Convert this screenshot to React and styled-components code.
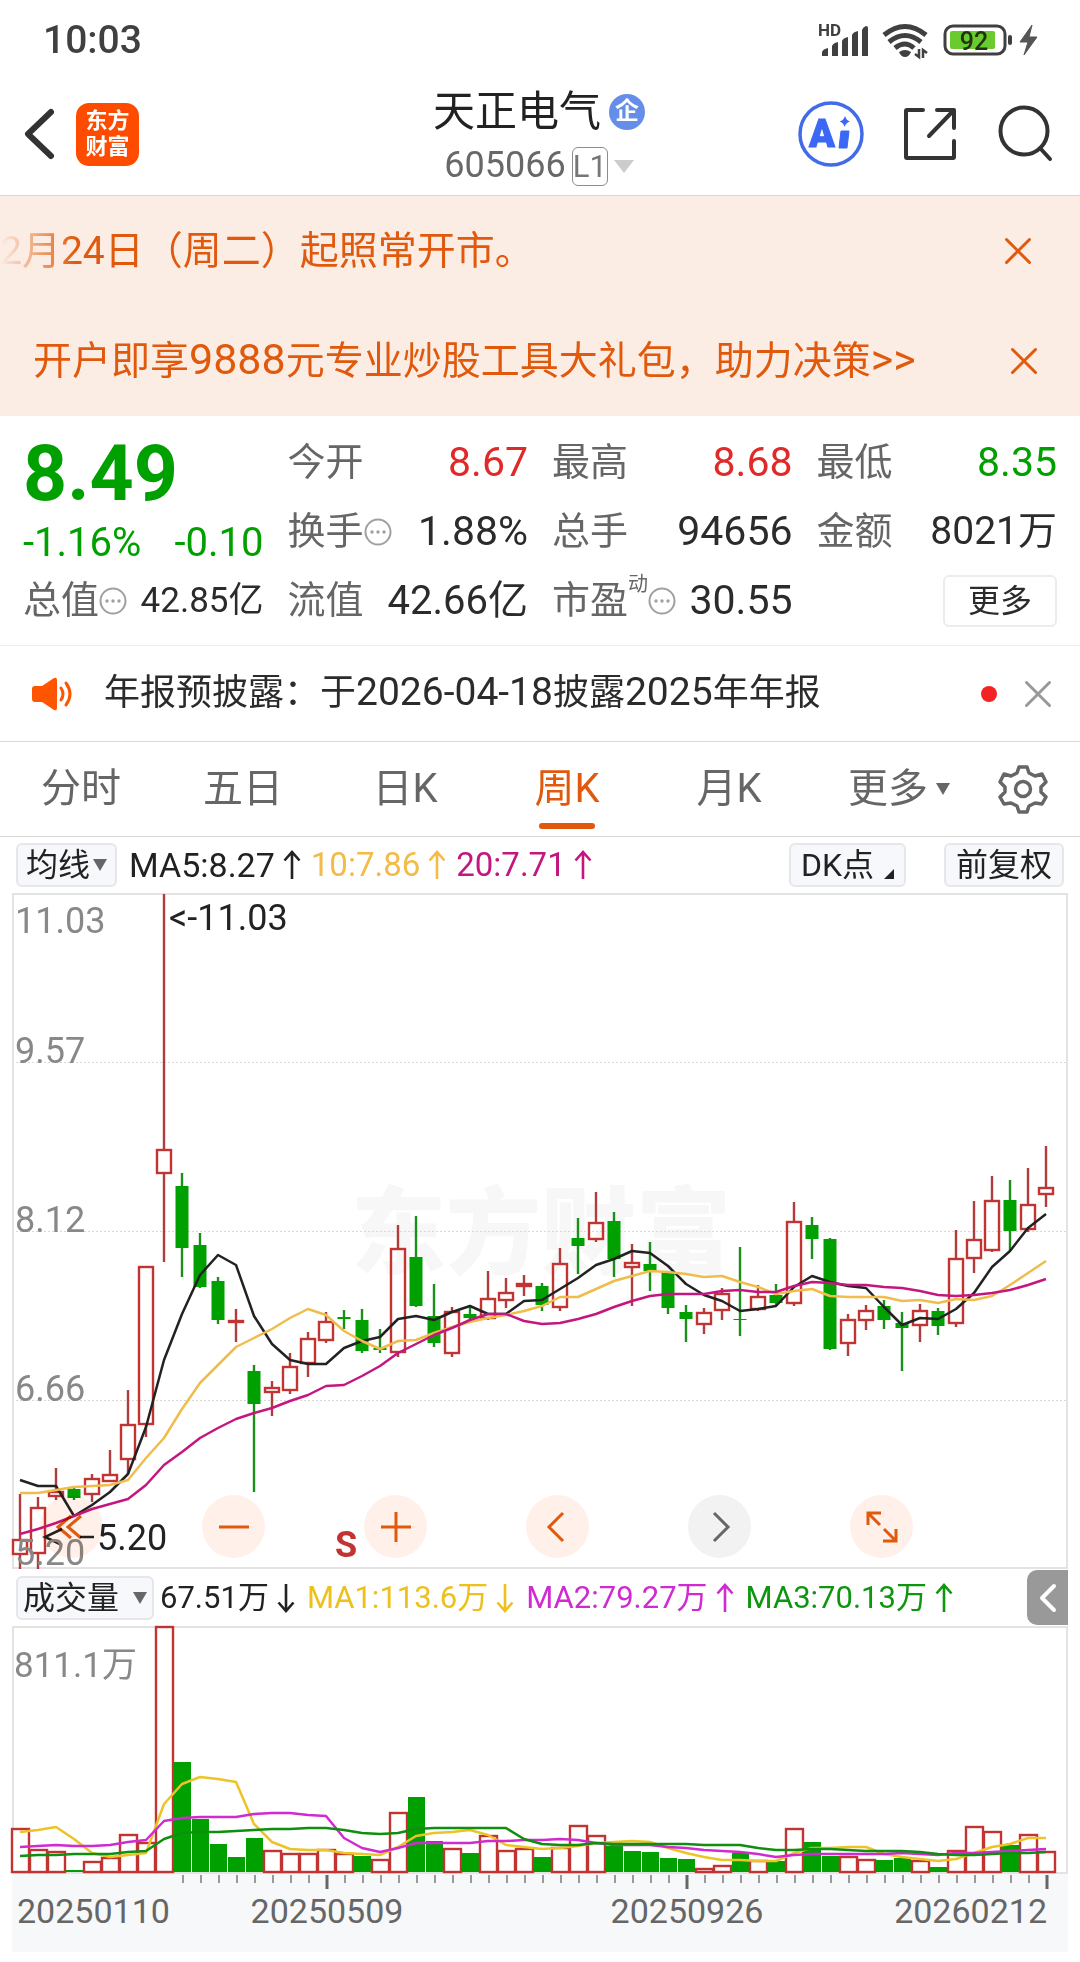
import React from 'react'
import styled, { createGlobalStyle } from 'styled-components'

const RED = '#c23431'
const GREEN = '#00a000'
const ORANGE = '#e0590c'
const FONT = "Roboto, 'Noto Sans CJK SC', sans-serif"

const GlobalStyle = createGlobalStyle`
    * {
        box-sizing: border-box;
    }

    body {
        margin: 0;
        background-color: #ffffff;
        color: #2b2b2b;
        font-family: ${FONT};
        line-height: 1.2;
    }

    button {
        margin: 0;
        padding: 0;
        border: none;
        background: none;
        color: inherit;
        font-family: inherit;
        line-height: inherit;
        cursor: pointer;
    }

    svg {
        display: block;
        flex-shrink: 0;
        overflow: visible;
    }
`

const Num = styled.span`
    font-size: ${({ $size }) => $size}px;
    line-height: 1;
`

/* ---------- status bar ---------- */

const StatusBar = styled.div`
    display: flex;
    align-items: center;
    justify-content: space-between;
    height: 76px;
    padding: 4px 42px 0 43px;
    color: #404040;
    font-size: 39px;
    font-weight: 500;
`

const StatusIcons = () => (
    <svg width="222" height="40" viewBox="816 20 222 40" fill="#404040">
        <text x="818" y="36" fontSize="17" fontWeight="700" fontFamily={FONT}>HD</text>
        <path d="M822 56v-4q1-3 6-4v8zM832 56V46q1-3 6-4v14zM842 56V41q1-3 6-4v19zM852 56V35q1-3 6-4v25zM862 56V30q1-3 4-4q2 0 2 2v28z" />
        <g fill="none" stroke="#404040" strokeWidth="5">
            <path d="M884 35Q905 18 926 35" />
            <path d="M889 42Q905 29 921 42" />
            <path d="M895 48Q905 40 914 48" />
        </g>
        <path d="M899 52q6-4 12 0q-2 5-6 5t-6-5z" />
        <path d="M919 49v8l-4-3M923 58v-8l4 3" fill="none" stroke="#404040" strokeWidth="2.5" />
        <rect x="945" y="26" width="60" height="28" rx="8" fill="none" stroke="#404040" strokeWidth="3" />
        <rect x="950" y="31" width="45" height="18" rx="2" fill="#69cb2d" />
        <text x="974" y="50" fontSize="25" fontWeight="500" textAnchor="middle" fill="#223311" fontFamily={FONT}>92</text>
        <rect x="1008" y="35" width="4" height="10" rx="2" />
        <path d="M1032 25l-12 17h8l-4 13 13-18h-8z" fill="#555555" stroke="#555555" />
    </svg>
)

/* ---------- header ---------- */

const Header = styled.header`
    display: grid;
    grid-template-columns: 1fr auto 1fr;
    align-items: start;
    height: 120px;
    padding: 4px 28px 0 24px;
    border-bottom: 1px solid #d8d8d8;
`

const HeaderSide = styled.div`
    display: flex;
    align-items: center;
    justify-content: ${({ $end }) => ($end ? 'flex-end' : 'flex-start')};
    height: 108px;
    gap: ${({ $gap }) => $gap}px;
`

const AppLogo = styled.a`
    display: flex;
    flex-direction: column;
    align-items: center;
    justify-content: center;
    width: 63px;
    height: 63px;
    border-radius: 13px;
    background-color: #ff4b00;
    color: #ffffff;
    font-size: 22px;
    line-height: 26px;
    font-weight: 700;
    text-decoration: none;
`

const Title = styled.div`
    padding: 5px 0 0 2px;
`

const TitleLine = styled.div`
    display: flex;
    align-items: center;
    justify-content: center;
    height: 54px;
    gap: ${({ $gap }) => $gap}px;
`

const StockName = styled.h1`
    margin: 0;
    font-size: 42px;
    line-height: 54px;
    font-weight: 400;
    color: #222222;
`

const CompanyBadge = styled.span`
    width: 36px;
    height: 36px;
    border-radius: 50%;
    background-color: #648ee8;
    color: #ffffff;
    font-size: 24px;
    line-height: 34px;
    font-weight: 700;
    text-align: center;
`

const StockCode = styled.span`
    color: #686868;
    font-size: 36px;
`

const LevelTag = styled.span`
    width: 36px;
    height: 39px;
    border: 1px solid #8c8c8c;
    border-radius: 6px;
    color: #777777;
    font-size: 31px;
    line-height: 37px;
    text-align: center;
`

const Caret = styled.span`
    width: 0;
    height: 0;
    border-left: ${({ $w }) => $w}px solid transparent;
    border-right: ${({ $w }) => $w}px solid transparent;
    border-top: ${({ $h }) => $h}px solid ${({ $color }) => $color};
`

/* ---------- banners ---------- */

const Banners = styled.section`
    background-color: #fcede4;
    color: ${ORANGE};
`

const Banner = styled.div`
    display: flex;
    align-items: center;
    justify-content: space-between;
    height: 110px;
    padding: 0 ${({ $right }) => $right}px 0 ${({ $left }) => $left}px;
    font-size: 39px;
    white-space: nowrap;
`

const Marquee = styled.span`
    mask-image: linear-gradient(to right, transparent, #000000 76px);
`

const Cross = ({ color, width = 3 }) => (
    <svg width="26" height="26" viewBox="0 0 26 26" stroke={color} strokeWidth={width} strokeLinecap="round">
        <path d="M1.5 1.5l23 23M24.5 1.5l-23 23" />
    </svg>
)

/* ---------- quote ---------- */

const Quote = styled.section`
    display: grid;
    grid-template-columns: repeat(4, 1fr);
    grid-template-rows: repeat(3, 69px);
    column-gap: 24px;
    padding: 12px 23px 10px;
    border-bottom: 1px solid #eeeeee;
`

const PriceCell = styled.div`
    grid-row: span 2;
    color: ${GREEN};
`

const Price = styled.div`
    font-size: 77px;
    line-height: 92px;
    font-weight: 700;
`

const Change = styled.div`
    display: flex;
    justify-content: space-between;
    font-size: 40px;
    line-height: 46px;
`

const Stat = styled.div`
    display: flex;
    align-items: center;
    justify-content: space-between;
    white-space: nowrap;
`

const StatLabel = styled.span`
    display: flex;
    align-items: center;
    color: #666666;
    font-size: 38px;
    line-height: 69px;
`

const Sup = styled.sup`
    align-self: flex-start;
    font-size: 20px;
    line-height: 36px;
`

const StatValue = styled.span`
    color: ${({ $color }) => $color || '#2b2b2b'};
    font-size: ${({ $size }) => $size || 41}px;
`

const MoreButton = styled.button`
    justify-self: end;
    align-self: center;
    width: 114px;
    height: 52px;
    border: 2px solid #ececec;
    border-radius: 6px;
    font-size: 32px;
    line-height: 44px;
`

const Dots = () => (
    <svg width="28" height="28" viewBox="0 0 28 28" fill="#a0a0a0">
        <circle cx="14" cy="14" r="12.5" fill="none" stroke="#a0a0a0" strokeWidth="2" />
        <circle cx="8" cy="14" r="1.7" />
        <circle cx="14" cy="14" r="1.7" />
        <circle cx="20" cy="14" r="1.7" />
    </svg>
)

/* ---------- notice ---------- */

const Notice = styled.section`
    display: flex;
    align-items: center;
    height: 96px;
    padding: 0 29px 0 32px;
    border-bottom: 1px solid #d8d8d8;
`

const NoticeText = styled.a`
    flex: 1;
    padding-left: 30px;
    color: #2b2b2b;
    font-size: 36px;
    white-space: nowrap;
    text-decoration: none;
`

const RedDot = styled.span`
    width: 16px;
    height: 16px;
    margin-right: 28px;
    border-radius: 50%;
    background-color: #f42323;
`

/* ---------- tabs ---------- */

const Tabs = styled.nav`
    display: flex;
    align-items: stretch;
    height: 95px;
    border-bottom: 1px solid #d8d8d8;
`

const Tab = styled.button`
    position: relative;
    flex: 0 0 15%;
    display: flex;
    align-items: center;
    justify-content: ${({ $end }) => ($end ? 'flex-end' : 'center')};
    gap: 8px;
    padding-right: ${({ $end }) => ($end ? 22 : 0)}px;
    color: ${({ $active }) => ($active ? ORANGE : '#666666')};
    font-size: 40px;

    &::after {
        content: '';
        display: ${({ $active }) => ($active ? 'block' : 'none')};
        position: absolute;
        bottom: 7px;
        left: calc(50% - 28px);
        width: 56px;
        height: 6px;
        border-radius: 3px;
        background-color: ${ORANGE};
    }
`

const GearButton = styled.button`
    flex: 1;
    display: flex;
    align-items: center;
    justify-content: center;
    padding-right: 6px;
`

/* ---------- indicators ---------- */

const Indicators = styled.div`
    display: flex;
    align-items: center;
    height: ${({ $height }) => $height}px;
    padding: 0 ${({ $right }) => $right}px 0 16px;
    white-space: nowrap;
`

const Chip = styled.button`
    display: flex;
    align-items: center;
    justify-content: center;
    gap: ${({ $gap }) => $gap || 3}px;
    height: 44px;
    padding: 0 ${({ $pad }) => $pad || 8}px;
    border: 2px solid #e5e7eb;
    border-radius: 6px;
    background-color: #f7f8fb;
    color: #222222;
    font-size: 32px;
    line-height: 40px;
`

const Corner = styled.span`
    align-self: flex-end;
    margin-bottom: 6px;
    border-left: 10px solid transparent;
    border-bottom: 10px solid #222222;
`

const Reading = styled.span`
    display: flex;
    align-items: center;
    gap: 8px;
    margin-left: ${({ $left }) => $left}px;
    color: ${({ $color }) => $color};
    font-size: ${({ $size }) => $size}px;
`

const Spacer = styled.span`
    flex: 1;
`

const ChipGap = styled.span`
    width: 38px;
`

const Drawer = styled.button`
    display: flex;
    align-items: center;
    justify-content: center;
    width: 41px;
    height: 55px;
    border-radius: 10px 0 0 10px;
    background-color: #999999;
`

const Arrow = ({ down }) => (
    <svg width="18" height="30" viewBox="0 0 18 30" fill="none" stroke="currentColor" strokeWidth="2.6">
        <path d={down ? 'M9 1v27M1.500 19.500L9 28l7.500-8.500' : 'M9 29V2M1.500 10.500L9 2l7.500 8.500'} />
    </svg>
)

/* ---------- charts ---------- */

const ChartArea = styled.div`
    position: relative;
    margin: 0 12px;

    & > svg {
        width: 100%;
        height: auto;
    }
`

const ChartTools = styled.div`
    position: absolute;
    left: 0;
    right: 0;
    bottom: 11px;
    display: flex;
    justify-content: space-between;
    padding: 0 155px 0 28px;
    mix-blend-mode: multiply;
`

const ToolButton = styled.button`
    display: flex;
    align-items: center;
    justify-content: center;
    width: 63px;
    height: 63px;
    border-radius: 50%;
    background-color: ${({ $muted }) => ($muted ? '#f2f2f2' : '#fff1e9')};
    color: ${({ $muted }) => ($muted ? '#666666' : ORANGE)};
`

const tools = [
    { name: '左移到头', path: 'M15 5L2 16l13 11M25 5L12 16l13 11' },
    { name: '缩小', path: 'M1 16h30' },
    { name: '放大', path: 'M1 16h30M16 1v30' },
    { name: '左移', path: 'M21 2L7 16l14 14' },
    { name: '右移', path: 'M10 2l14 14L10 30', muted: true },
    { name: '全屏', path: 'M2 14V2h13M2 2l12 12M30 18v12H17M30 30L18 18' },
]

// [up, high, body top, body bottom, low]
const candles = [
    [1, 601, 647, 661, 676], [1, 604, 615, 660, 676], [1, 575, 599, 603, 607], [0, 595, 596, 605, 607],
    [1, 581, 586, 601, 609], [1, 557, 582, 588, 589], [1, 497, 532, 566, 581], [1, 373, 374, 531, 544],
    [1, 1, 257, 280, 369], [0, 280, 293, 355, 384], [0, 340, 352, 394, 395], [0, 384, 388, 427, 431],
    [1, 416, 428, 429, 449], [0, 472, 478, 511, 599], [1, 488, 495, 499, 523], [1, 460, 474, 497, 501],
    [1, 439, 446, 470, 484], [1, 419, 429, 447, 450], [0, 417, 424, 426, 436], [0, 416, 427, 458, 460],
    [0, 436, 455, 457, 460], [1, 332, 356, 459, 464], [0, 323, 364, 413, 414], [0, 391, 423, 450, 454],
    [1, 414, 419, 460, 464], [0, 412, 421, 425, 427], [1, 378, 406, 425, 427], [1, 385, 400, 407, 415],
    [1, 382, 391, 393, 403], [0, 390, 393, 412, 418], [1, 355, 371, 414, 418], [0, 325, 345, 353, 381],
    [1, 299, 330, 346, 349], [0, 319, 328, 366, 384], [1, 351, 370, 374, 413], [0, 349, 371, 378, 398],
    [0, 378, 379, 415, 421], [0, 412, 419, 426, 449], [1, 415, 420, 431, 441], [1, 395, 401, 417, 427],
    [0, 354, 426, 427, 443], [1, 392, 404, 416, 418], [0, 391, 402, 410, 413], [1, 309, 329, 410, 413],
    [0, 324, 332, 346, 366], [0, 345, 346, 456, 457], [1, 421, 427, 450, 463], [1, 412, 418, 427, 437],
    [0, 407, 413, 427, 436], [0, 419, 430, 435, 478], [1, 411, 418, 432, 449], [0, 415, 418, 433, 442],
    [1, 337, 366, 430, 434], [1, 308, 347, 365, 380], [1, 283, 308, 357, 359], [0, 287, 307, 338, 358],
    [1, 275, 312, 336, 339], [1, 253, 295, 301, 314],
]

const ma5 = [
    587, 593, 593, 623, 612, 599, 581, 534, 467, 421, 382, 362, 372, 423, 451, 467, 471, 471, 455, 448,
    444, 426, 423, 427, 419, 413, 421, 421, 408, 407, 396, 385, 372, 366, 358, 360, 373, 391, 402, 408,
    418, 416, 413, 394, 383, 389, 393, 395, 414, 432, 425, 426, 416, 400, 374, 358, 335, 321,
]
const ma10 = [
    600, 600, 597, 594, 593, 592, 587, 565, 545, 516, 490, 472, 454, 445, 436, 425, 416, 422, 438, 448,
    456, 448, 447, 440, 434, 429, 425, 422, 418, 413, 404, 404, 396, 388, 383, 378, 379, 381, 384, 383,
    389, 394, 401, 398, 396, 403, 404, 404, 404, 408, 407, 410, 406, 407, 403, 392, 380, 368,
]
const ma20 = [
    641, 636, 630, 623, 616, 611, 606, 592, 572, 559, 545, 535, 526, 520, 515, 508, 502, 493, 492, 483,
    473, 460, 451, 442, 435, 427, 421, 421, 428, 431, 430, 426, 421, 414, 408, 403, 401, 401, 401, 398,
    397, 399, 399, 393, 389, 390, 392, 392, 394, 395, 398, 402, 403, 402, 400, 397, 392, 386,
]

// positive: rising week, negative: falling week
const volumes = [
    43, 22, 20, -2, 10, 14, 37, 29, 245, -110, -53, -28, -15, -34, 21, 18, 18, 22, 18, -16,
    12, 59, -75, -31, 23, -19, 36, 21, 23, -15, 24, 46, 36, -26, -21, -20, -14, -13, 3, 6,
    -19, 11, -11, 43, -30, -16, 15, 12, -12, -14, 11, -5, 21, 45, 40, -27, 37, 20,
]
const vma1 = [
    40, 42, 45, 33, 19, 15, 17, 19, 68, 88, 95, 93, 90, 48, 30, 23, 22, 22, 19, 18,
    17, 25, 36, 39, 40, 42, 37, 27, 25, 23, 24, 26, 29, 30, 31, 30, 24, 19, 15, 12,
    12, 11, 11, 19, 24, 24, 25, 25, 18, 15, 13, 11, 13, 19, 25, 28, 34, 34,
]
const vma2 = [
    25, 26, 27, 26, 26, 27, 30, 32, 51, 54, 55, 55, 55, 58, 59, 59, 57, 56, 34, 24,
    20, 24, 29, 29, 29, 29, 31, 31, 32, 32, 33, 32, 29, 27, 27, 27, 25, 24, 22, 21,
    20, 18, 15, 17, 18, 18, 18, 18, 18, 19, 18, 17, 19, 19, 20, 21, 22, 23,
]
const vma3 = [
    16, 17, 17, 18, 18, 18, 20, 21, 33, 39, 40, 40, 41, 42, 43, 43, 44, 44, 42, 39,
    38, 39, 43, 44, 44, 44, 44, 44, 33, 28, 27, 27, 29, 28, 28, 28, 28, 28, 27, 27,
    27, 24, 22, 22, 23, 23, 22, 21, 21, 21, 20, 18, 17, 17, 18, 19, 19, 20,
]

const STEP = 18
const VOLUME_BASE = 246
const FIRST_TICK = 9
const MAJOR_TICKS = [17, 37, 57]

const xAt = (i) => 8 + i * STEP
const toPoints = (values, toY = (v) => v) => values.map((v, i) => `${xAt(i)},${toY(v)}`).join(' ')
const volumeY = (v) => VOLUME_BASE - v

const Line = ({ points, color }) => (
    <polyline points={points} fill="none" stroke={color} strokeWidth="2.5" strokeLinejoin="round" />
)

const Candle = ({ index, data }) => {
    const [up, high, top, bottom, low] = data
    const x = xAt(index)

    if (up) {
        return (
            <g stroke={RED} strokeWidth="2.4" fill="none">
                <path d={`M${x} ${high}V${top}M${x} ${bottom}V${low}`} stroke="#b03c3c" />
                <rect x={x - 7} y={top} width="14" height={bottom - top} />
            </g>
        )
    }
    return (
        <g fill={GREEN}>
            <path d={`M${x} ${high}V${low}`} stroke="#1a8f1a" strokeWidth="2.4" />
            <rect x={x - 6.5} y={top} width="13" height={bottom - top} />
        </g>
    )
}

const PriceChart = () => (
    <svg viewBox="0 0 1056 676" fontFamily={FONT} fontSize="36">
        <text x="529" y="374" fontSize="95" fontWeight="900" textAnchor="middle" fill="#f7f7f7">东方财富</text>
        {[169, 338, 507].map((y) => (
            <path key={y} d={`M0 ${y}.5H1056`} stroke="#d8d8d8" strokeDasharray="2 2" />
        ))}
        <rect x="1" y="1" width="1054" height="674" fill="none" stroke="#e3e3e3" strokeWidth="2" />
        {candles.map((data, i) => <Candle key={i} index={i} data={data} />)}
        <Line points={toPoints(ma5)} color="#222222" />
        <Line points={toPoints(ma10)} color="#f0bd4c" />
        <Line points={toPoints(ma20)} color="#c3177f" />
        <text x="157" y="37" fill="#222222">&lt;-11.03</text>
        <path d="M50 636L33 644l17 8M68 644h14" fill="none" stroke="#222222" strokeWidth="2.5" />
        <text x="85" y="657" fill="#222222">5.20</text>
        <text x="323" y="664" fontWeight="700" fill={RED}>S</text>
        <g fill="#888888">
            <text x="3" y="40">11.03</text>
            <text x="3" y="170">9.57</text>
            <text x="3" y="339">8.12</text>
            <text x="3" y="508">6.66</text>
            <text x="3" y="672">5.20</text>
        </g>
    </svg>
)

const VolumeChart = () => (
    <svg viewBox="0 0 1056 248" fontFamily={FONT} fontSize="35">
        <rect x="1" y="1" width="1054" height="246" fill="none" stroke="#e3e3e3" strokeWidth="2" />
        {volumes.map((v, i) => (v > 0
            ? <rect key={i} x={xAt(i) - 8} y={volumeY(v)} width="17" height={v} fill="#ffffff" stroke={RED} strokeWidth="2.4" />
            : <rect key={i} x={xAt(i) - 8} y={volumeY(-v)} width="17" height={-v} fill={GREEN} />
        ))}
        <Line points={toPoints(vma1, volumeY)} color="#edc427" />
        <Line points={toPoints(vma2, volumeY)} color="#cf2bd0" />
        <Line points={toPoints(vma3, volumeY)} color="#0f8f0f" />
        <text x="2" y="51" fill="#888888">811.1万</text>
    </svg>
)

const DateAxis = () => (
    <svg viewBox="0 0 1056 78" fontFamily={FONT} fontSize="34" fill="#666666">
        <rect width="1056" height="78" fill="#f7f8fa" />
        {candles.map((_, i) => {
            const major = MAJOR_TICKS.includes(i)
            if (i < FIRST_TICK) return null
            return <path key={i} d={`M${xAt(i) + 1} 1v${major ? 14 : 8}`} stroke={major ? '#666666' : '#999999'} strokeWidth={major ? 3 : 2} />
        })}
        <text x="5" y="49">20250110</text>
        <text x="315" y="49" textAnchor="middle">20250509</text>
        <text x="675" y="49" textAnchor="middle">20250926</text>
        <text x="1035" y="49" textAnchor="end">20260212</text>
    </svg>
)

const App = () => (
    <>
        <GlobalStyle />
        <StatusBar>
            <span>10:03</span>
            <StatusIcons />
        </StatusBar>
        <Header>
            <HeaderSide $gap={21}>
                <button aria-label="返回">
                    <svg width="31" height="52" viewBox="0 0 31 52" fill="none" stroke="#333333" strokeWidth="6" strokeLinecap="round" strokeLinejoin="round">
                        <path d="M27 4L4 26l23 22" />
                    </svg>
                </button>
                <AppLogo href="#home">
                    <span>东方</span>
                    <span>财富</span>
                </AppLogo>
            </HeaderSide>
            <Title>
                <TitleLine $gap={8}>
                    <StockName>天正电气</StockName>
                    <CompanyBadge>企</CompanyBadge>
                </TitleLine>
                <TitleLine $gap={6}>
                    <StockCode>605066</StockCode>
                    <LevelTag>L1</LevelTag>
                    <Caret $w={10} $h={13} $color="#cccccc" />
                </TitleLine>
            </Title>
            <HeaderSide $end $gap={39}>
                <button aria-label="Ai">
                    <svg width="66" height="66" viewBox="0 0 66 66" fill="#3b68f5">
                        <circle cx="33" cy="33" r="31" fill="none" stroke="#416be8" strokeWidth="3.5" />
                        <text x="11" y="46" fontSize="38" fontWeight="900" fontFamily="Roboto, sans-serif" stroke="#3b68f5">A</text>
                        <path d="M43 30h8l-2 17h-8z" stroke="#3b68f5" strokeLinejoin="round" />
                        <path d="M47 15q1.500 4.500 5 5.500q-4 1-5.500 5.500q-1-4.500-5-5.500q4-1 5.500-5.500z" />
                    </svg>
                </button>
                <button aria-label="分享">
                    <svg width="54" height="54" viewBox="0 0 54 54" fill="none" stroke="#333333" strokeWidth="4" strokeLinecap="round" strokeLinejoin="round">
                        <path d="M20 3H4q-1 0-1 1v46q0 1 1 1h46q1 0 1-1V34M34 3h17v18M51 3L26 29" />
                    </svg>
                </button>
                <button aria-label="搜索">
                    <svg width="56" height="56" viewBox="0 0 56 56" fill="none" stroke="#333333" strokeWidth="4" strokeLinecap="round">
                        <circle cx="28" cy="25" r="23.500" />
                        <path d="M44 42l10 11" />
                    </svg>
                </button>
            </HeaderSide>
        </Header>

        <Banners>
            <Banner $left={0} $right={49}>
                <Marquee>2月24日（周二）起照常开市。</Marquee>
                <button aria-label="关闭公告"><Cross color={ORANGE} /></button>
            </Banner>
            <Banner $left={33} $right={43}>
                <span>开户即享<Num $size={43}>9888</Num>元专业炒股工具大礼包，助力决策<Num $size={43}>&gt;&gt;</Num></span>
                <button aria-label="关闭广告"><Cross color={ORANGE} /></button>
            </Banner>
        </Banners>

        <Quote>
            <PriceCell>
                <Price>8.49</Price>
                <Change>
                    <span>-1.16%</span>
                    <span>-0.10</span>
                </Change>
            </PriceCell>
            <Stat><StatLabel>今开</StatLabel><StatValue $color="#e02a2a">8.67</StatValue></Stat>
            <Stat><StatLabel>最高</StatLabel><StatValue $color="#e02a2a">8.68</StatValue></Stat>
            <Stat><StatLabel>最低</StatLabel><StatValue $color={GREEN}>8.35</StatValue></Stat>
            <Stat><StatLabel>换手<Dots /></StatLabel><StatValue>1.88%</StatValue></Stat>
            <Stat><StatLabel>总手</StatLabel><StatValue>94656</StatValue></Stat>
            <Stat><StatLabel>金额</StatLabel><StatValue $size={39}>8021万</StatValue></Stat>
            <Stat><StatLabel>总值<Dots /></StatLabel><StatValue $size={35}>42.85亿</StatValue></Stat>
            <Stat><StatLabel>流值</StatLabel><StatValue $size={40}>42.66亿</StatValue></Stat>
            <Stat><StatLabel>市盈<Sup>动</Sup><Dots /></StatLabel><StatValue>30.55</StatValue></Stat>
            <MoreButton>更多</MoreButton>
        </Quote>

        <Notice>
            <svg width="42" height="34" viewBox="0 0 42 34" fill="#ff5500">
                <path d="M3 9h7L22 1q3-1 3 2v28q0 3-3 2L10 25H3q-3 0-3-3V12q0-3 3-3z" />
                <path d="M29 11q4 6 0 12M34 6q8 11 0 22" fill="none" stroke="#ff5500" strokeWidth="3" strokeLinecap="round" />
            </svg>
            <NoticeText href="#notice">
                年报预披露：于<Num $size={39}>2026-04-18</Num>披露<Num $size={39}>2025</Num>年年报
            </NoticeText>
            <RedDot />
            <button aria-label="关闭提示"><Cross color="#999999" /></button>
        </Notice>

        <Tabs>
            <Tab>分时</Tab>
            <Tab>五日</Tab>
            <Tab>日K</Tab>
            <Tab $active>周K</Tab>
            <Tab>月K</Tab>
            <Tab $end>更多<Caret $w={7} $h={12} $color="#666666" /></Tab>
            <GearButton aria-label="设置">
                <svg width="48" height="50" viewBox="0 0 48 50" fill="none" stroke="#666666" strokeWidth="3.500" strokeLinejoin="round">
                    <path d="M20 3h8l2 6 6 3 7-2 4 8-5 5v5l5 5-4 7-7-1-6 3-2 6h-8l-2-6-6-3-7 1-4-7 5-5v-5l-5-5 4-8 7 2 6-3z" />
                    <circle cx="24" cy="25" r="7.500" />
                </svg>
            </GearButton>
        </Tabs>

        <Indicators $height={56} $right={16}>
            <Chip>均线<Caret $w={7} $h={12} $color="#666666" /></Chip>
            <Reading $size={34} $left={12} $color="#222222">MA5:8.27<Arrow /></Reading>
            <Reading $size={33} $left={10} $color="#f3bb48">10:7.86<Arrow /></Reading>
            <Reading $size={33} $left={10} $color="#c3177f">20:7.71<Arrow /></Reading>
            <Spacer />
            <Chip $pad={10} $gap={10}>DK点<Corner /></Chip>
            <ChipGap />
            <Chip $pad={10}>前复权</Chip>
        </Indicators>
        <ChartArea>
            <PriceChart />
            <ChartTools>
                {tools.map(({ name, path, muted }) => (
                    <ToolButton key={name} aria-label={name} $muted={muted}>
                        <svg width="32" height="32" viewBox="0 0 32 32" fill="none" stroke="currentColor" strokeWidth="3">
                            <path d={path} />
                        </svg>
                    </ToolButton>
                ))}
            </ChartTools>
        </ChartArea>

        <Indicators $height={57} $right={12}>
            <Chip $pad={5} $gap={14}>成交量<Caret $w={7} $h={12} $color="#666666" /></Chip>
            <Reading $size={31} $left={6} $color="#222222">67.51万<Arrow down /></Reading>
            <Reading $size={31} $left={12} $color="#edc11b">MA1:113.6万<Arrow down /></Reading>
            <Reading $size={31} $left={12} $color="#cf2bd0">MA2:79.27万<Arrow /></Reading>
            <Reading $size={31} $left={12} $color="#0f960f">MA3:70.13万<Arrow /></Reading>
            <Spacer />
            <Drawer aria-label="展开">
                <svg width="16" height="28" viewBox="0 0 16 28" fill="none" stroke="#ffffff" strokeWidth="4" strokeLinecap="round" strokeLinejoin="round">
                    <path d="M14 2L2 14l12 12" />
                </svg>
            </Drawer>
        </Indicators>
        <ChartArea>
            <VolumeChart />
            <DateAxis />
        </ChartArea>
    </>
)

export default App
